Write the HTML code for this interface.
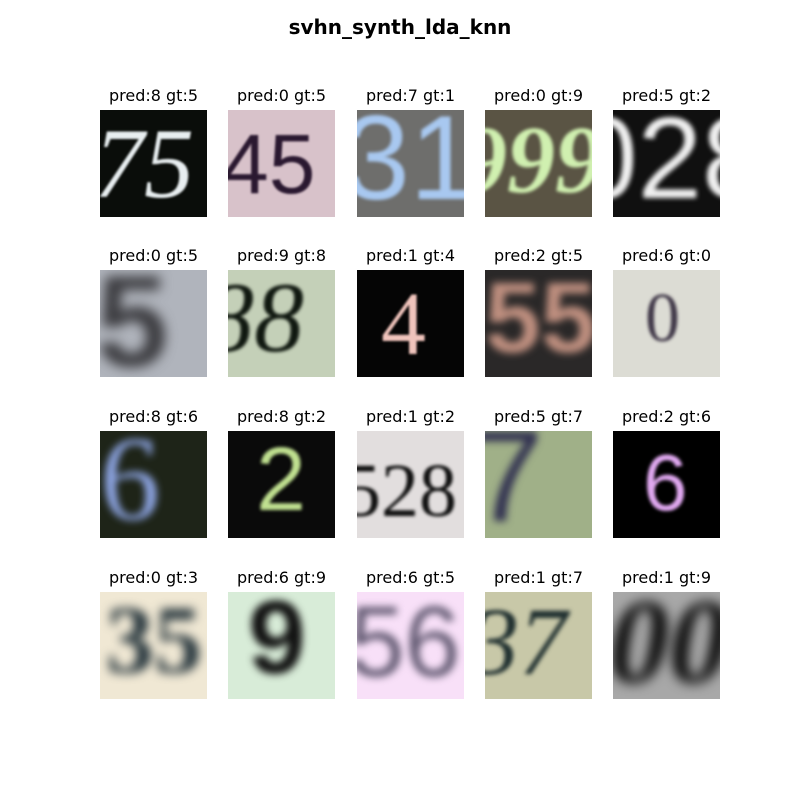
<!DOCTYPE html>
<html><head><meta charset="utf-8"><style>
body{margin:0;width:800px;height:800px;background:#fff;position:relative;overflow:hidden;font-family:"DejaVu Sans","Liberation Sans",sans-serif}
.t{position:absolute;left:0;width:800px;top:15px;text-align:center;font-weight:bold;font-size:20px;color:#000}
.l{position:absolute;width:140px;text-align:center;font-size:16px;color:#000}
.c{position:absolute;width:107px;height:107px;overflow:hidden}
.c span{position:absolute;white-space:nowrap;line-height:1}
</style></head><body>
<div class="t">svhn_synth_lda_knn</div>
<div id="g"></div>
<script>
var xs=[100,228,357,485,613],ys=[110,270,431,592];
var labels=["pred:8 gt:5","pred:0 gt:5","pred:7 gt:1","pred:0 gt:9","pred:5 gt:2",
"pred:0 gt:5","pred:9 gt:8","pred:1 gt:4","pred:2 gt:5","pred:6 gt:0",
"pred:8 gt:6","pred:8 gt:2","pred:1 gt:2","pred:5 gt:7","pred:2 gt:6",
"pred:0 gt:3","pred:6 gt:9","pred:6 gt:5","pred:1 gt:7","pred:1 gt:9"];
var cells=[
["#0a0d0a","75","#e8eef0",100,-6,4,"serif","italic",400,1],
["#d8c2ca","45","#2a1830",84,-6,12,"sans-serif","normal",400,1],
["#6e6e6c","31","#a8c8f0",120,-14,-12,"sans-serif","normal",400,1.5],
["#5a5444","999","#d0f0b0",96,-26,2,"serif","italic",700,1.5],
["#101010","028","#f0f0f0",116,-40,-10,"sans-serif","normal",400,2.5],
["#b0b4bc","5","#3a3a3e",130,-4,-14,"sans-serif","normal",700,6],
["#c4d0b8","88","#101810",100,-24,-2,"serif","italic",400,1.5],
["#050505","4","#f0c4bc",90,24,10,"serif","normal",400,1],
["#2a2828","55","#c09080",100,0,-2,"sans-serif","normal",700,4],
["#dcdcd4","0","#403848",70,32,14,"serif","normal",400,1.5],
["#1e2418","6","#90a8e8",120,0,-12,"serif","normal",400,4],
["#0a0a0a","2","#c0e090",90,28,4,"sans-serif","normal",400,1.5],
["#e2dede","528","#101010",76,-14,22,"serif","normal",400,1.5],
["#a0b088","7","#303050",130,-14,-20,"sans-serif","normal",400,4],
["#000000","6","#e0a8f0",80,30,12,"sans-serif","normal",400,1.5],
["#f0e8d4","35","#203038",96,6,0,"serif","normal",700,5],
["#d8ecd8","9","#101010",104,20,-6,"sans-serif","normal",700,4],
["#f8e0f8","56","#605870",100,-8,0,"sans-serif","normal",400,4],
["#c8c8a8","37","#203030",96,-14,2,"serif","italic",400,2],
["#a8a8a8","00","#000000",120,-4,-10,"serif","italic",700,6]];
var h="";
for(var i=0;i<20;i++){var r=Math.floor(i/5),k=i%5,c=cells[i],x=xs[k],y=ys[r];
h+='<div class="l" style="left:'+(x-16.5)+'px;top:'+(y-24)+'px">'+labels[i]+'</div>';
h+='<div class="c" style="left:'+x+'px;top:'+y+'px;background:'+c[0]+'"><span style="color:'+c[2]+';font-size:'+c[3]+'px;left:'+c[4]+'px;top:'+c[5]+'px;font-family:'+(c[6]=="serif"?'\'Liberation Serif\',serif':'\'Liberation Sans\',sans-serif')+';font-style:'+c[7]+';font-weight:'+c[8]+';filter:blur('+c[9]+'px)">'+c[1]+'</span></div>';}
document.getElementById("g").innerHTML=h;
</script>
</body></html>
